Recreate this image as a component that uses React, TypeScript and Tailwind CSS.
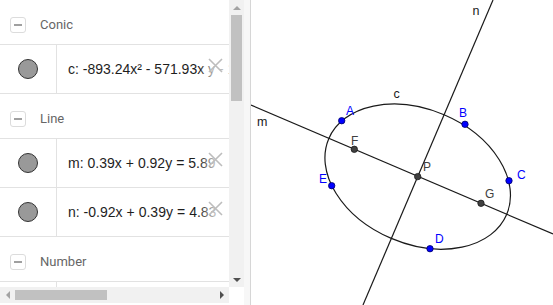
import React from "react";

type Item = {
    label: string;
    rest: React.ReactNode;
};

const Collapse = () => (
    <div className="w-[16px] h-[16px] rounded-[3px] border border-[#dcdcdc] flex items-center justify-center">
        <div className="w-[8px] h-[2px] bg-[#a0a0a0]" />
    </div>
);

const Header = ({ title }: { title: string }) => (
    <div className="h-[45px] shrink-0 border-b border-[#e2e2e2] flex items-center pt-[6px] pl-[10px] gap-[14px]">
        <Collapse />
        <span className="text-[13px] text-[#666] font-['Roboto',sans-serif]">{title}</span>
    </div>
);

const Op = ({ children }: { children: React.ReactNode }) => (
    <span className="mx-[4px]">{children}</span>
);

const Row = ({ item }: { item: Item }) => (
    <div className="h-[49px] shrink-0 border-b border-[#e2e2e2] flex">
        <div className="w-[57px] shrink-0 border-r border-[#e2e2e2] flex items-center justify-center">
            <div className="w-[20px] h-[20px] rounded-full bg-[#999] border border-[#333]" />
        </div>
        <div className="relative flex-1 overflow-hidden flex items-center pl-[11px]">
            <span className="whitespace-nowrap text-[14px] text-[#1e1e1e] font-['Liberation_Sans',Arial,sans-serif]">
                {item.label}
                {item.rest}
            </span>
            <div className="absolute right-0 top-0 bottom-0 w-[30px] bg-linear-to-r from-white/0 via-white/70 to-white/70" />
            <svg className="absolute right-[6px] top-[13px]" width="15" height="15" viewBox="0 0 15 15">
                <path d="M1 1 L14 14 M14 1 L1 14" stroke="#bdbdbd" strokeWidth="1.6" />
            </svg>
        </div>
    </div>
);

const pts = [
    { n: "A", x: 341.7, y: 120.7, lx: 346, ly: 115, blue: true },
    { n: "B", x: 465, y: 124.3, lx: 459, ly: 117, blue: true },
    { n: "C", x: 509, y: 180.7, lx: 517, ly: 179, blue: true },
    { n: "D", x: 430, y: 248.7, lx: 435, ly: 243, blue: true },
    { n: "E", x: 331.7, y: 185.7, lx: 319, ly: 183, blue: true },
    { n: "F", x: 354.3, y: 149.3, lx: 351, ly: 145, blue: false },
    { n: "G", x: 481, y: 203.3, lx: 485, ly: 198, blue: false },
    { n: "P", x: 417.7, y: 176.6, lx: 423, ly: 171, blue: false },
];

const App = () => {
    const conic: Item = {
        label: "c: ",
        rest: <>-893.24x² - 571.93x y - 1004.11</>,
    };
    const m: Item = {
        label: "m: ",
        rest: <>0.39x<Op>+</Op>0.92y<Op>=</Op>5.89</>,
    };
    const n: Item = {
        label: "n: ",
        rest: <>-0.92x<Op>+</Op>0.39y<Op>=</Op>4.83</>,
    };

    return (
        <div className="w-[553px] h-[305px] flex bg-white overflow-hidden">
            <div className="w-[244px] shrink-0 flex flex-col">
                <div className="h-[287px] flex">
                    <div className="w-[229px] flex flex-col overflow-hidden">
                        <Header title="Conic" />
                        <Row item={conic} />
                        <Header title="Line" />
                        <Row item={m} />
                        <Row item={n} />
                        <Header title="Number" />
                        <div className="h-[49px] shrink-0 flex">
                            <div className="w-[57px] shrink-0 border-r border-[#e2e2e2]" />
                        </div>
                    </div>
                    <div className="w-[15px] bg-[#f1f1f1] flex flex-col items-center">
                        <div className="h-[15px] flex items-center justify-center">
                            <div className="w-0 h-0 border-x-[4px] border-x-transparent border-b-[4px] border-b-[#a3a3a3]" />
                        </div>
                        <div className="w-[11px] h-[86px] bg-[#c1c1c1]" />
                        <div className="flex-1" />
                        <div className="h-[15px] flex items-center justify-center">
                            <div className="w-0 h-0 border-x-[4px] border-x-transparent border-t-[4px] border-t-[#505050]" />
                        </div>
                    </div>
                </div>
                <div className="h-[16px] flex">
                    <div className="w-[229px] bg-[#f1f1f1] flex items-center">
                        <div className="w-[15px] flex items-center justify-center">
                            <div className="w-0 h-0 border-y-[4px] border-y-transparent border-r-[4px] border-r-[#a3a3a3]" />
                        </div>
                        <div className="w-[92px] h-[10px] bg-[#c1c1c1]" />
                        <div className="flex-1" />
                        <div className="w-[15px] flex items-center justify-center">
                            <div className="w-0 h-0 border-y-[4px] border-y-transparent border-l-[4px] border-l-[#505050]" />
                        </div>
                    </div>
                </div>
            </div>
            <div className="w-[7px] shrink-0 bg-[#f7f7f7] border-r border-[#d6d6d6]" />
            <div className="flex-1 relative">
                <svg width="302" height="305" viewBox="251 0 302 305" className="block">
                    <g stroke="#1a1a1a" strokeWidth="1.2" fill="none">
                        <line x1="251" y1="105" x2="553" y2="234" />
                        <line x1="493" y1="0" x2="363" y2="305" />
                        <ellipse cx="417.7" cy="176.6" rx="96.7" ry="67.2" transform="rotate(23.1 417.7 176.6)" />
                    </g>
                    <g fontFamily="'Liberation Sans', Arial, sans-serif" fontSize="12.5" fill="#1a1a1a">
                        <text x="257" y="126">m</text>
                        <text x="393.5" y="97.5">c</text>
                        <text x="472.5" y="15">n</text>
                    </g>
                    {pts.map((p) => (
                        <g key={p.n}>
                            <circle
                                cx={p.x}
                                cy={p.y}
                                r="3.2"
                                fill={p.blue ? "#0000ff" : "#404040"}
                                stroke={p.blue ? "#000066" : "#1a1a1a"}
                                strokeWidth="0.8"
                            />
                            <text
                                x={p.lx}
                                y={p.ly}
                                fontFamily="'Liberation Sans', Arial, sans-serif"
                                fontSize="12"
                                fill={p.blue ? "#0000ff" : "#404040"}
                            >
                                {p.n}
                            </text>
                        </g>
                    ))}
                </svg>
            </div>
        </div>
    );
};

export default App;
